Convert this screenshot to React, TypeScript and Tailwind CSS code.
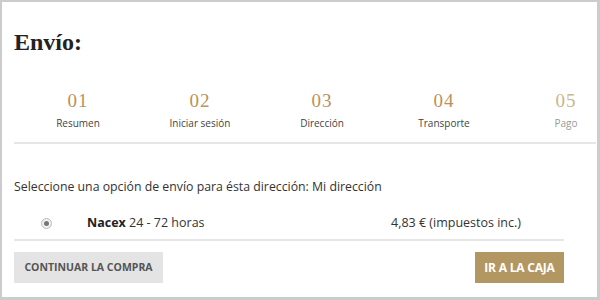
import React from 'react';

const steps = [
  { num: '01', label: 'Resumen', muted: false },
  { num: '02', label: 'Iniciar sesión', muted: false },
  { num: '03', label: 'Dirección', muted: false },
  { num: '04', label: 'Transporte', muted: false },
  { num: '05', label: 'Pago', muted: true },
];

export default function App() {
  return (
    <div className="w-[600px] h-[300px] bg-white border-l-2 border-t-2 border-r-[3px] border-b-[3px] border-[#cccccc] overflow-hidden font-['Open_Sans',sans-serif] text-[#333]">
      <div className="pl-[12px]">
        <h1 className="pt-[25px] text-[24px] leading-[30px] font-bold font-['Liberation_Serif',serif] text-[#222]">
          Envío:
        </h1>

        <div className="mt-[33px] border-b-2 border-[#e6e6e6] mr-[1px]">
          <div className="flex ml-[3px] pb-[12px]">
            {steps.map((s) => (
              <div key={s.num} className="w-[122px] shrink-0 flex flex-col items-center">
                <span
                  className={`font-['Liberation_Serif',serif] text-[19px] leading-[22px] tracking-[1px] ${
                    s.muted ? 'text-[#cdb48c]' : 'text-[#b8935a]'
                  }`}
                >
                  {s.num}
                </span>
                <span className={`mt-[4px] text-[10px] leading-[14px] ${s.muted ? 'text-[#999]' : 'text-[#444]'}`}>
                  {s.label}
                </span>
              </div>
            ))}
          </div>
        </div>

        <div className="w-[550px]">
          <p className="mt-[35px] text-[12.3px] leading-[16px] text-[#333]">
            Seleccione una opción de envío para ésta dirección: Mi dirección
          </p>

          <div className="mt-[14px] flex items-center h-[32px] border-b-2 border-[#e6e6e6] pb-[2px]">
            <div className="w-[65px] flex justify-center">
              <span className="w-[11px] h-[11px] rounded-full border border-[#bbb] bg-[#f2f2f2] flex items-center justify-center">
                <span className="w-[5px] h-[5px] rounded-full bg-[#777]" />
              </span>
            </div>
            <div className="ml-[8px] w-[304px] text-[12.5px] text-[#333]">
              <span className="font-bold text-[#222]">Nacex</span> 24 - 72 horas
            </div>
            <div className="text-[12.5px] text-[#333]">4,83 € (impuestos inc.)</div>
          </div>

          <div className="mt-[11px] flex justify-between">
            <button className="h-[31px] w-[149px] bg-[#e4e4e4] text-[10.5px] font-bold text-[#555] uppercase">
              Continuar la compra
            </button>
            <button className="h-[31px] w-[89px] bg-[#b39762] text-[12px] font-bold text-white uppercase tracking-[-0.2px]">
              Ir a la caja
            </button>
          </div>
        </div>
      </div>
    </div>
  );
}
